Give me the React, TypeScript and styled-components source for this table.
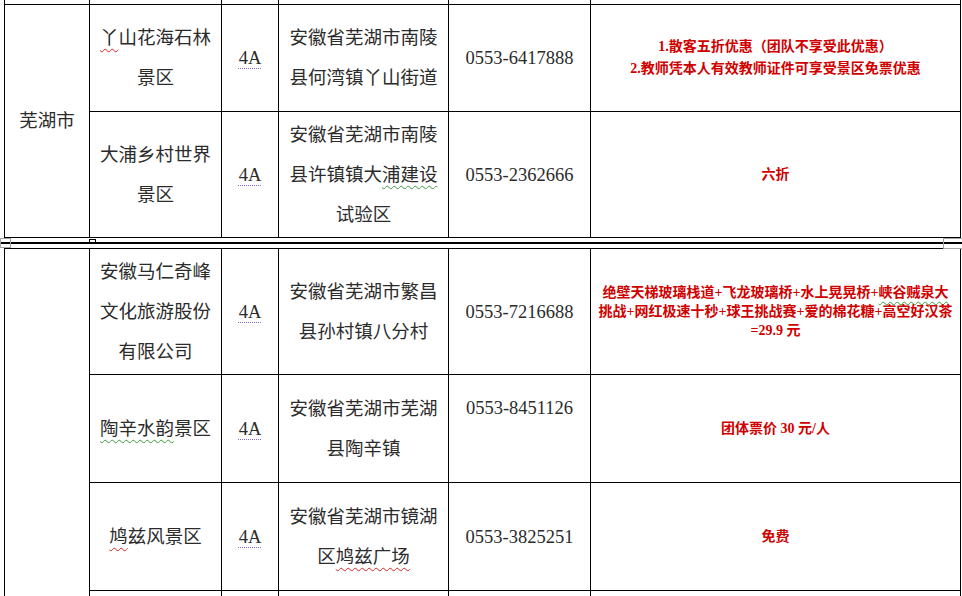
import * as React from 'react';
import styled, { createGlobalStyle } from 'styled-components';

const GlobalStyle = createGlobalStyle`
  html, body {
    margin: 0;
    padding: 0;
    background: #fff;
  }
  body {
    width: 962px;
    height: 596px;
    overflow: hidden;
    font-family: 'Liberation Serif', 'Noto Sans CJK SC', serif;
  }
`;

const Page = styled.div`
  width: 962px;
  background: #fff;
`;

const Sheet = styled.table<{ $top?: boolean }>`
  margin-left: 4px;
  width: 956px;
  table-layout: fixed;
  border-collapse: separate;
  border-spacing: 0;
  border-left: 1px solid #000;
  border-top: ${p => (p.$top ? '1px solid #000' : 'none')};
`;

const Col = styled.col<{ $w: number }>`
  width: ${p => p.$w}px;
`;

const Row = styled.tr<{ $h: number }>`
  height: ${p => p.$h}px;
`;

const Cell = styled.td<{ $padTop?: number }>`
  box-sizing: border-box;
  padding: ${p => (p.$padTop ? `${p.$padTop}px 0 0` : '0')};
  border-right: 1px solid #000;
  border-bottom: 1px solid #000;
  text-align: center;
  vertical-align: ${p => (p.$padTop ? 'top' : 'middle')};
  color: #2b2b2b;
  font-size: 18.5px;
  line-height: 40px;
  white-space: nowrap;
`;

const StubCell = styled.td`
  padding: 0;
  border-right: 1px solid #000;
  border-bottom: 1px solid #000;
  font-size: 0;
  line-height: 0;
`;

const Line = styled.span`
  display: block;
`;

// Word 的拼写/语法波浪线
const Wavy = styled.span<{ $tone: 'red' | 'green' }>`
  text-decoration: underline wavy ${p => (p.$tone === 'red' ? '#e02020' : '#3c9a3c')};
  text-decoration-thickness: 1px;
  text-underline-offset: 4px;
  text-decoration-skip-ink: none;
`;

const Grade = styled.span`
  text-decoration: underline dotted #8a66c4;
  text-decoration-thickness: 1px;
  text-underline-offset: 4px;
`;

const Offer = styled.div<{ $lh: number }>`
  color: #d10000;
  font-weight: 700;
  font-size: 14px;
  line-height: ${p => p.$lh}px;
  white-space: nowrap;
`;

const Separator = styled.div`
  position: relative;
  height: 10px;
  padding-top: 4px;
  box-sizing: border-box;
`;

const Bar = styled.div`
  height: 2px;
  background: #000;
`;

const MoveHandle = styled.div`
  position: absolute;
  left: 0;
  top: 0;
  width: 11px;
  height: 10px;
  box-sizing: border-box;
  border: 1px solid #a3a3a3;
`;

const ColMark = styled.div`
  position: absolute;
  left: 89px;
  top: 1px;
  width: 7px;
  height: 4px;
  box-sizing: border-box;
  border: 1px solid #000;
  background: #fff;
`;

const SizeHandle = styled.div`
  position: absolute;
  right: -2px;
  top: 0;
  width: 21px;
  height: 11px;
  box-sizing: border-box;
  border: 1px solid #a3a3a3;
`;

const widths = [85, 132, 57, 170, 142, 370];

function Cols() {
  return (
    <colgroup>
      {widths.map((w, i) => (
        <Col key={'c' + i} $w={w} />
      ))}
    </colgroup>
  );
}

type SpotProps = {
  h: number;
  city?: React.ReactNode;
  name: React.ReactNode;
  address: React.ReactNode;
  phone: string;
  phoneTop?: number;
  offer: React.ReactNode;
  offerLh?: number;
};

function SpotRow({ h, city, name, address, phone, phoneTop, offer, offerLh = 22 }: SpotProps) {
  return (
    <Row $h={h}>
      {city}
      <Cell>{name}</Cell>
      <Cell>
        <Grade>4A</Grade>
      </Cell>
      <Cell>{address}</Cell>
      <Cell $padTop={phoneTop}>{phone}</Cell>
      <Cell>
        <Offer $lh={offerLh}>{offer}</Offer>
      </Cell>
    </Row>
  );
}

export default function App() {
  return (
    <Page>
      <GlobalStyle />
      <Sheet>
        <Cols />
        <tbody>
          <Row $h={5}>
            {widths.map((_, i) => (
              <StubCell key={'s' + i} />
            ))}
          </Row>
          <SpotRow
            h={107}
            city={<Cell rowSpan={2}>芜湖市</Cell>}
            name={
              <>
                <Line>
                  <Wavy $tone="red">丫</Wavy>山花海石林
                </Line>
                <Line>景区</Line>
              </>
            }
            address={
              <>
                <Line>安徽省芜湖市南陵</Line>
                <Line>县何湾镇丫山街道</Line>
              </>
            }
            phone="0553-6417888"
            offer={
              <>
                <Line>1.散客五折优惠（团队不享受此优惠）</Line>
                <Line>2.教师凭本人有效教师证件可享受景区免票优惠</Line>
              </>
            }
          />
          <SpotRow
            h={126}
            name={
              <>
                <Line>大浦乡村世界</Line>
                <Line>景区</Line>
              </>
            }
            address={
              <>
                <Line>安徽省芜湖市南陵</Line>
                <Line>
                  县许镇镇大<Wavy $tone="green">浦建设</Wavy>
                </Line>
                <Line>试验区</Line>
              </>
            }
            phone="0553-2362666"
            offer="六折"
          />
        </tbody>
      </Sheet>

      <Separator>
        <Bar />
        <MoveHandle />
        <ColMark />
        <SizeHandle />
      </Separator>

      <Sheet $top>
        <Cols />
        <tbody>
          <SpotRow
            h={126}
            city={<Cell rowSpan={4} />}
            name={
              <>
                <Line>安徽马仁奇峰</Line>
                <Line>文化旅游股份</Line>
                <Line>有限公司</Line>
              </>
            }
            address={
              <>
                <Line>安徽省芜湖市繁昌</Line>
                <Line>县孙村镇八分村</Line>
              </>
            }
            phone="0553-7216688"
            offerLh={19}
            offer={
              <>
                <Line>
                  绝壁天梯玻璃栈道+飞龙玻璃桥+水上晃晃桥+<Wavy $tone="green">峡谷贼泉大</Wavy>
                </Line>
                <Line>挑战+网红极速十秒+球王挑战赛+爱的棉花糖+高空好汉茶</Line>
                <Line>=29.9 元</Line>
              </>
            }
          />
          <SpotRow
            h={108}
            name={
              <>
                <Wavy $tone="green">陶辛水韵</Wavy>景区
              </>
            }
            address={
              <>
                <Line>安徽省芜湖市芜湖</Line>
                <Line>县陶辛镇</Line>
              </>
            }
            phone="0553-8451126"
            phoneTop={13}
            offer="团体票价 30 元/人"
          />
          <SpotRow
            h={108}
            name={
              <>
                <Wavy $tone="red">鸠</Wavy>兹风景区
              </>
            }
            address={
              <>
                <Line>安徽省芜湖市镜湖</Line>
                <Line>
                  区<Wavy $tone="red">鸠兹广场</Wavy>
                </Line>
              </>
            }
            phone="0553-3825251"
            offer="免费"
          />
          <Row $h={60}>
            {widths.slice(1).map((_, i) => (
              <Cell key={'e' + i} />
            ))}
          </Row>
        </tbody>
      </Sheet>
    </Page>
  );
}
